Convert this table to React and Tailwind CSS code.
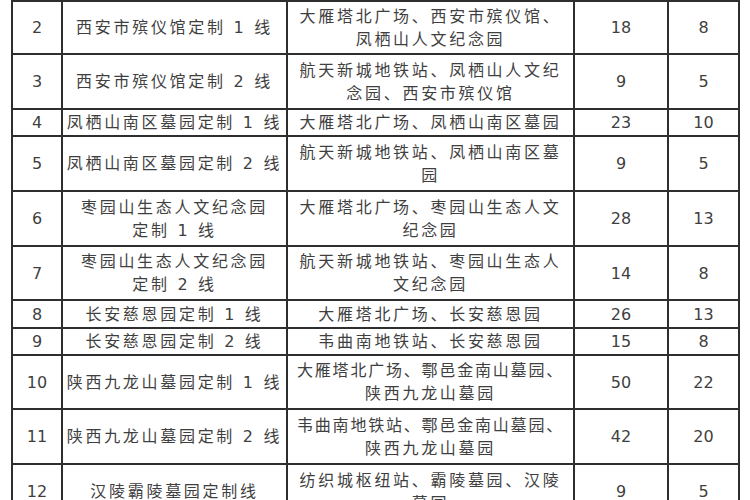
const rows = [
  { h: 'h-[53px]', n: '2', name: ['西安市殡仪馆定制 1 线'], route: ['大雁塔北广场、西安市殡仪馆、', '凤栖山人文纪念园'], a: '18', b: '8' },
  { h: 'h-[55px]', n: '3', name: ['西安市殡仪馆定制 2 线'], route: ['航天新城地铁站、凤栖山人文纪', '念园、西安市殡仪馆'], a: '9', b: '5' },
  { h: 'h-[27px]', n: '4', name: ['凤栖山南区墓园定制 1 线'], route: ['大雁塔北广场、凤栖山南区墓园'], a: '23', b: '10' },
  { h: 'h-[55px]', n: '5', name: ['凤栖山南区墓园定制 2 线'], route: ['航天新城地铁站、凤栖山南区墓', '园'], a: '9', b: '5' },
  { h: 'h-[55px]', n: '6', name: ['枣园山生态人文纪念园', '定制 1 线'], route: ['大雁塔北广场、枣园山生态人文', '纪念园'], a: '28', b: '13' },
  { h: 'h-[54px]', n: '7', name: ['枣园山生态人文纪念园', '定制 2 线'], route: ['航天新城地铁站、枣园山生态人', '文纪念园'], a: '14', b: '8' },
  { h: 'h-[28px]', n: '8', name: ['长安慈恩园定制 1 线'], route: ['大雁塔北广场、长安慈恩园'], a: '26', b: '13' },
  { h: 'h-[27px]', n: '9', name: ['长安慈恩园定制 2 线'], route: ['韦曲南地铁站、长安慈恩园'], a: '15', b: '8' },
  { h: 'h-[54px]', n: '10', name: ['陕西九龙山墓园定制 1 线'], route: ['大雁塔北广场、鄠邑金南山墓园、', '陕西九龙山墓园'], a: '50', b: '22', tight: true },
  { h: 'h-[55px]', n: '11', name: ['陕西九龙山墓园定制 2 线'], route: ['韦曲南地铁站、鄠邑金南山墓园、', '陕西九龙山墓园'], a: '42', b: '20', tight: true },
  { h: 'h-[55px]', n: '12', name: ['汉陵霸陵墓园定制线'], route: ['纺织城枢纽站、霸陵墓园、汉陵', '墓园'], a: '9', b: '5' },
];

const cell = 'flex flex-col items-center justify-center border-r-2 border-b-2 border-[#2e2e2e] text-center overflow-hidden';

export default function App() {
  return (
    <div
      className="w-[750px] h-[500px] overflow-hidden bg-white pl-[11px] text-[16px] leading-[23px] text-[#3f3f3f]"
      style={{ fontFamily: '"DejaVu Sans", "Noto Sans CJK SC", sans-serif' }}
    >
      <div className="w-[729px] border-t-2 border-l-2 border-[#2e2e2e]">
        {rows.map((r) => (
          <div key={r.n} className={`grid grid-cols-[50px_225px_287px_94px_71px] ${r.h}`}>
            <div className={cell}>{r.n}</div>
            <div className={`${cell} tracking-[2.7px]`}>
              {r.name.map((l, i) => (
                <div key={i} className="whitespace-nowrap">{l}</div>
              ))}
            </div>
            <div className={cell}>
              {r.route.map((l, i) => (
                <div
                  key={i}
                  className={`whitespace-nowrap ${r.tight && i === 0 ? 'tracking-[1.8px]' : 'tracking-[2.7px]'}`}
                >
                  {l}
                </div>
              ))}
            </div>
            <div className={cell}>{r.a}</div>
            <div className={cell}>{r.b}</div>
          </div>
        ))}
      </div>
    </div>
  );
}
